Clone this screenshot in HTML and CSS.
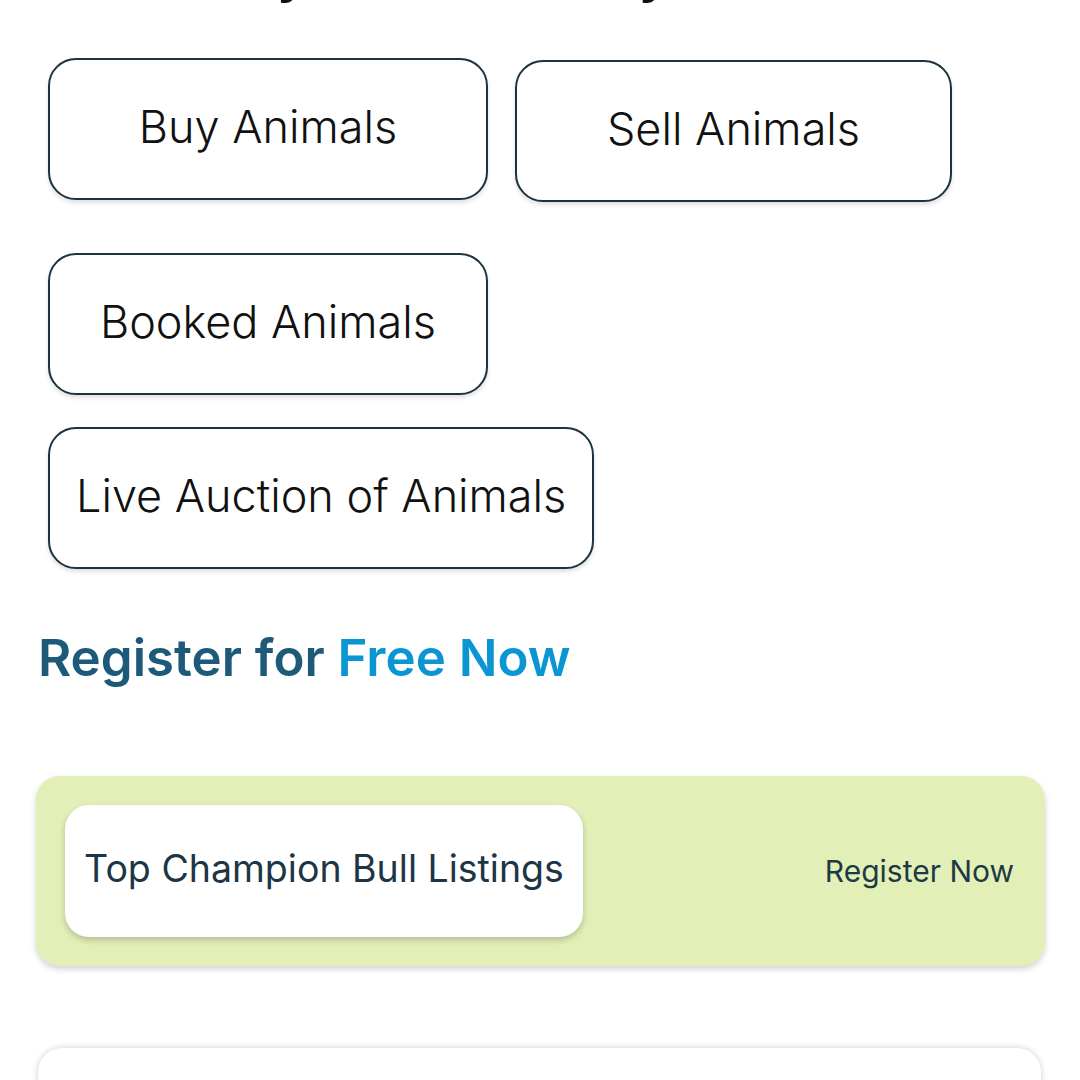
FILE: index.html
```html
<!DOCTYPE html>
<html lang="en">
<head>
<meta charset="utf-8">
<title>Animals</title>
<link rel="stylesheet" href="styles.css">
</head>
<body>
<main class="page">
  <h1 class="intro-title">Buy and Sell Easy</h1>

  <section class="actions">
    <div class="action-row row-first">
      <a class="action-btn">Buy Animals</a>
      <a class="action-btn btn-sell">Sell Animals</a>
    </div>
    <div class="action-row row-second">
      <a class="action-btn">Booked Animals</a>
    </div>
    <div class="action-row row-third">
      <a class="action-btn btn-wide">Live Auction of Animals</a>
    </div>
  </section>

  <h2 class="register-title">Register for <span class="accent">Free Now</span></h2>

  <section class="promo-card">
    <div class="promo-pill">Top Champion Bull Listings</div>
    <a class="promo-link">Register Now</a>
  </section>

  <section class="next-card"></section>
</main>
</body>
</html>
```

FILE: styles.css
```css
html, body {
  margin: 0;
  padding: 0;
  background: #ffffff;
}

body {
  width: 1080px;
  height: 1080px;
  overflow: hidden;
  font-family: "Inter", "Noto Sans", sans-serif;
}

.page {
  display: flex;
  flex-direction: column;
}

.intro-title {
  margin: -58px 0 0 0;
  padding-left: 209px;
  font-family: "Liberation Sans", Arial, sans-serif;
  font-weight: 700;
  font-size: 52px;
  line-height: 64px;
  color: #111111;
  word-spacing: 4px;
}

.actions {
  margin-top: 52px;
  padding-left: 48px;
  display: flex;
  flex-direction: column;
}

.action-row {
  display: flex;
  gap: 27px;
}

.row-second {
  margin-top: 51px;
}

.row-third {
  margin-top: 32px;
}

.action-btn {
  box-sizing: border-box;
  min-width: 440px;
  height: 142px;
  padding: 0 28px 6px;
  display: flex;
  align-items: center;
  justify-content: center;
  border: 2.5px solid #1c3340;
  border-radius: 28px;
  background: #ffffff;
  box-shadow: 0 3px 4px rgba(0, 0, 0, 0.12);
  font-weight: 300;
  font-size: 45px;
  color: #111111;
  white-space: nowrap;
}

.btn-sell {
  min-width: 437px;
  margin-top: 2px;
}

.btn-wide {
  padding: 0 26px 6px;
}

.register-title {
  margin: 60px 0 0 38px;
  font-weight: 600;
  font-size: 51px;
  line-height: 58px;
  color: #1d5a7a;
}

.accent {
  color: #0a96d3;
}

.promo-card {
  box-sizing: border-box;
  margin: 89px 0 0 36px;
  width: 1009px;
  height: 190px;
  padding: 29px 31px 29px 29px;
  display: flex;
  align-items: center;
  justify-content: space-between;
  background: #e2efb7;
  border-radius: 24px;
  box-shadow: 0 3px 6px rgba(0, 0, 0, 0.18);
}

.promo-pill {
  box-sizing: border-box;
  width: 518px;
  height: 132px;
  padding-bottom: 6px;
  display: flex;
  align-items: center;
  justify-content: center;
  background: #ffffff;
  border-radius: 24px;
  box-shadow: 0 3px 6px rgba(0, 0, 0, 0.2);
  font-size: 37.5px;
  font-weight: 400;
  color: #1d3545;
  white-space: nowrap;
}

.promo-link {
  font-size: 30px;
  font-weight: 400;
  color: #1d3a44;
}

.next-card {
  margin: 82px 0 0 38px;
  width: 1003px;
  height: 120px;
  background: #ffffff;
  border-radius: 24px;
  box-shadow: 0 0 6px rgba(0, 0, 0, 0.2);
}
```
